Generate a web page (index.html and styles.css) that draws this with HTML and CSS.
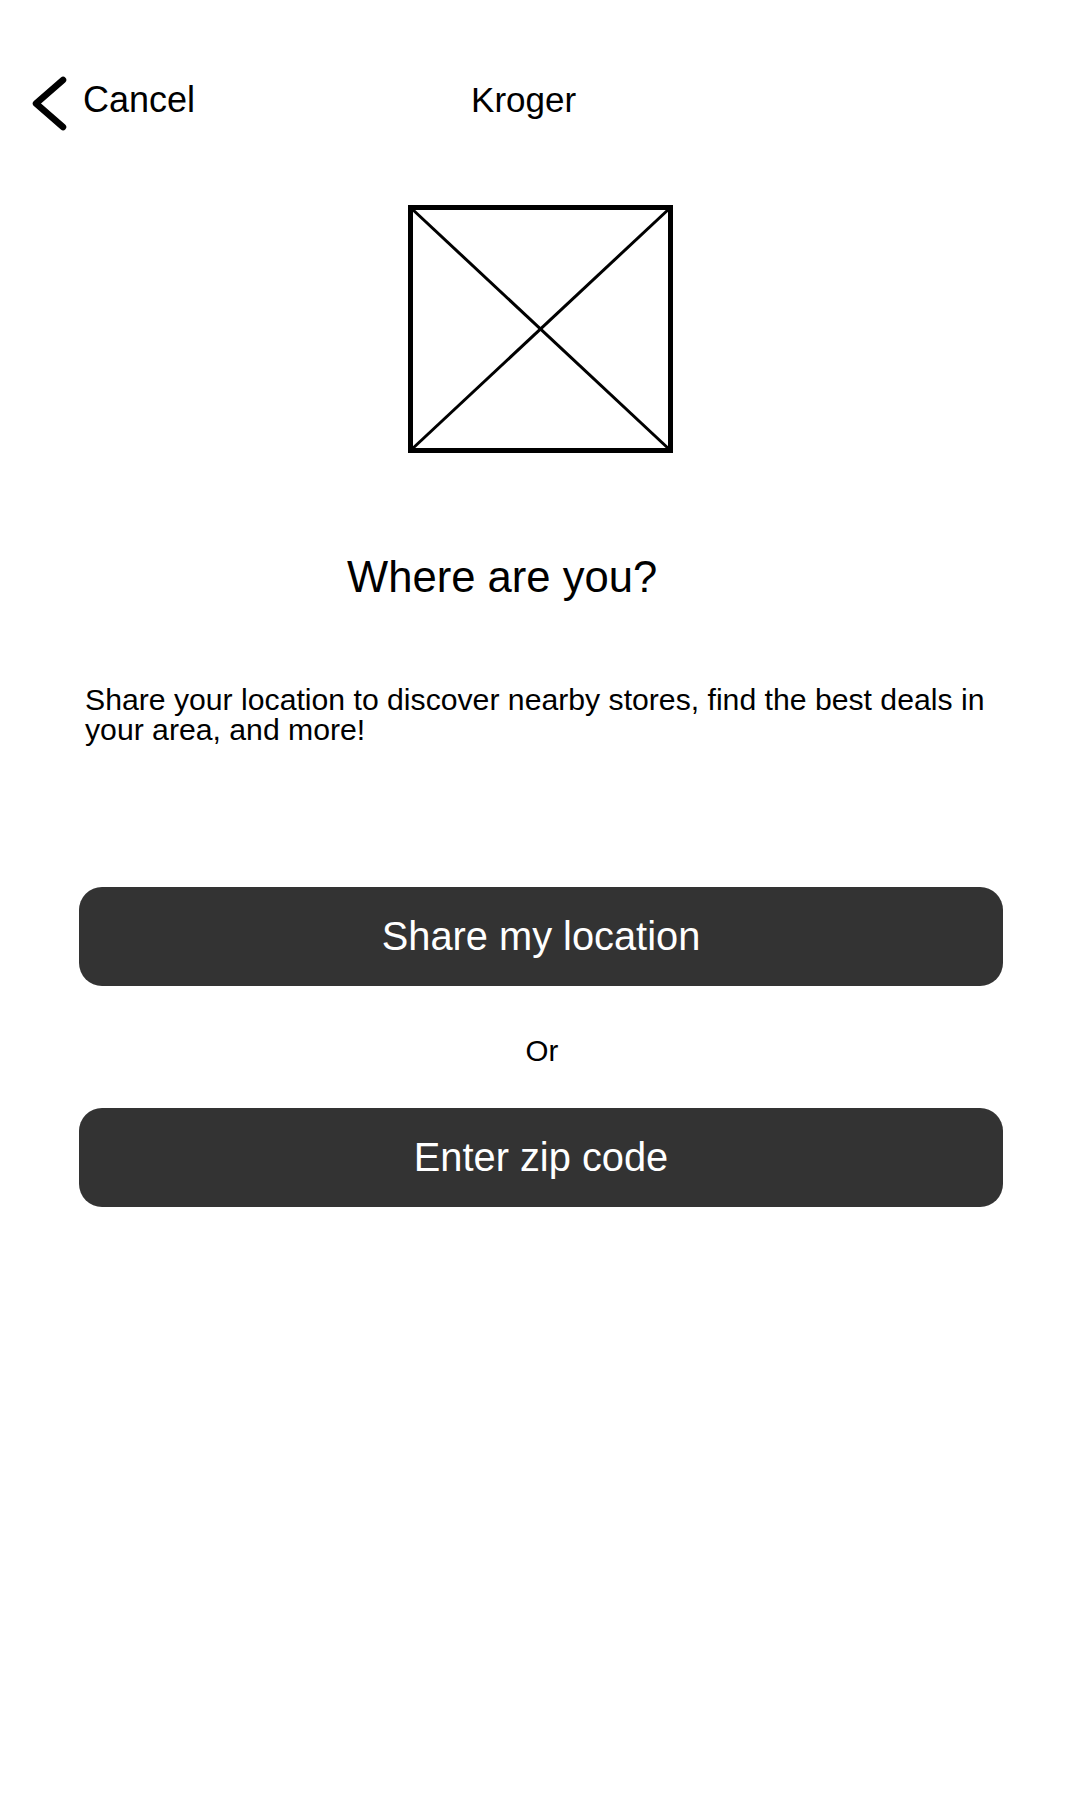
FILE: index.html
```html
<!DOCTYPE html>
<html lang="en">
<head>
<meta charset="utf-8">
<title>Kroger - Where are you?</title>
<link rel="stylesheet" href="styles.css">
</head>
<body>
<div class="screen">
  <header class="topbar">
    <a class="back" href="#">
      <svg class="back-icon" width="36" height="55" viewBox="0 0 36 55" aria-hidden="true">
        <path d="M32 4 L5 27.5 L32 51" fill="none" stroke="#000" stroke-width="6.5" stroke-linecap="round" stroke-linejoin="round"/>
      </svg>
      <span class="back-label">Cancel</span>
    </a>
    <span class="title">Kroger</span>
  </header>

  <div class="placeholder">
    <svg width="265" height="248" viewBox="0 0 265 248" aria-hidden="true">
      <rect x="2.5" y="2.5" width="260" height="243" fill="#fff" stroke="#000" stroke-width="5"/>
      <line x1="3" y1="3" x2="262" y2="245" stroke="#000" stroke-width="3"/>
      <line x1="262" y1="3" x2="3" y2="245" stroke="#000" stroke-width="3"/>
    </svg>
  </div>

  <h1 class="heading">Where are you?</h1>

  <p class="intro">Share your location to discover nearby stores, find the best deals in your area, and more!</p>

  <div class="actions">
    <button class="btn" type="button">Share my location</button>
    <div class="or">Or</div>
    <button class="btn" type="button">Enter zip code</button>
  </div>
</div>
</body>
</html>
```

FILE: styles.css
```css
* {
  box-sizing: border-box;
}

html, body {
  margin: 0;
  padding: 0;
  background: #ffffff;
}

body {
  font-family: "Liberation Sans", Arial, sans-serif;
  color: #000000;
  width: 1080px;
  min-height: 1800px;
}

.screen {
  display: flex;
  flex-direction: column;
}

.topbar {
  display: flex;
  align-items: flex-start;
  padding: 76px 0 0 31px;
}

.back {
  display: flex;
  align-items: flex-start;
  gap: 16px;
  color: #000;
  text-decoration: none;
}

.back-icon {
  display: block;
}

.back-label {
  margin-top: 4px;
  font-size: 36px;
  line-height: 40px;
}

.title {
  margin-left: 276px;
  margin-top: 4px;
  font-size: 35px;
  line-height: 40px;
}

.placeholder {
  display: flex;
  justify-content: center;
  margin-top: 74px;
  padding-left: 1px;
}

.placeholder svg {
  display: block;
}

.heading {
  margin: 99px 0 0 347px;
  font-size: 43.6px;
  line-height: 50px;
  font-weight: normal;
}

.intro {
  margin: 83px 0 0 0;
  padding: 0 80px 0 85px;
  font-size: 30.2px;
  line-height: 30px;
}

.actions {
  display: flex;
  flex-direction: column;
  align-items: center;
  margin-top: 142px;
}

.btn {
  width: 924px;
  height: 99px;
  margin-left: 2px;
  border: none;
  border-radius: 23px;
  background: #333333;
  color: #ffffff;
  font-family: "Liberation Sans", Arial, sans-serif;
  font-size: 39.8px;
  line-height: 99px;
  padding: 0;
  text-align: center;
}

.or {
  margin: 48px 0 40px 4px;
  font-size: 29.5px;
  line-height: 34px;
}
```
